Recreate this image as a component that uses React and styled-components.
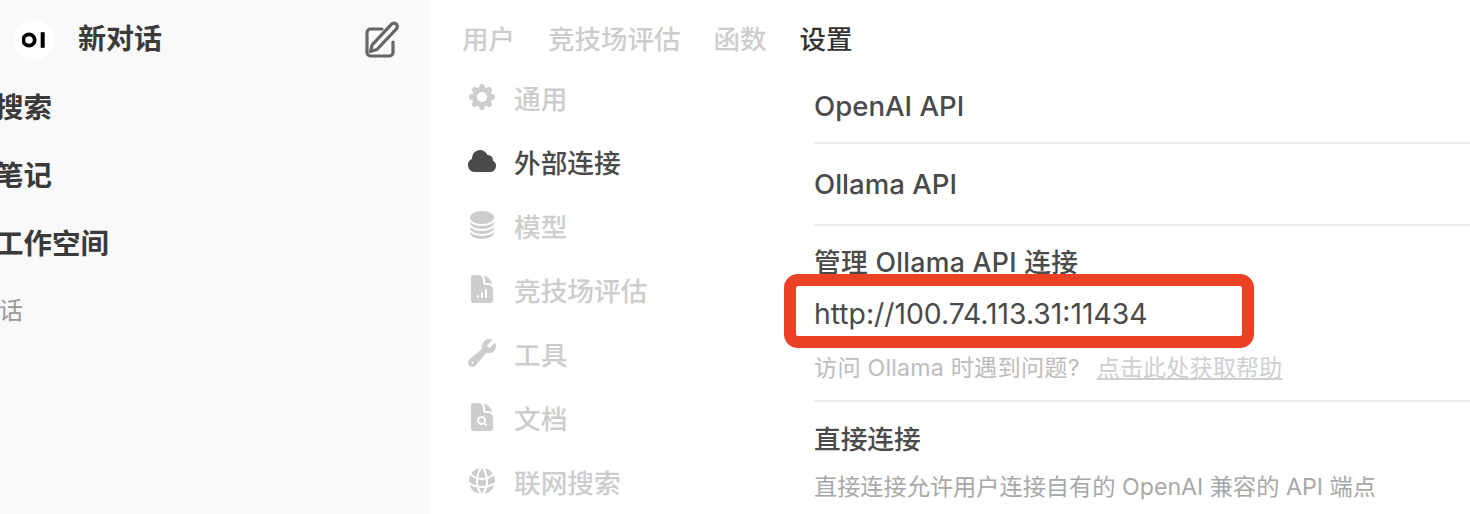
import styled, { createGlobalStyle } from "styled-components";
import {
  HiCog8Tooth,
  HiCloud,
  HiCircleStack,
  HiDocumentChartBar,
  HiWrench,
  HiDocumentMagnifyingGlass,
  HiGlobeAlt,
} from "react-icons/hi2";

const GlobalStyle = createGlobalStyle`
  html, body {
    margin: 0;
    height: 100%;
    overflow: hidden;
    background: #fff;
  }
  body {
    font-family: Inter, "Noto Sans CJK SC", sans-serif;
  }
`;

const Page = styled.div`
  display: flex;
  width: 1470px;
  height: 514px;
  overflow: hidden;
`;

const Sidebar = styled.aside`
  width: 430px;
  flex-shrink: 0;
  background: #f9f9f9;
  overflow: hidden;
`;

const SidebarHead = styled.div`
  display: flex;
  align-items: center;
  height: 40px;
  padding: 20px 28px 0 14px;
`;

const Logo = styled.div`
  width: 40px;
  height: 40px;
  border-radius: 50%;
  background: #fff;
  display: flex;
  align-items: center;
  justify-content: center;
`;

const NewChat = styled.div`
  margin: -2px 0 0 24px;
  font-size: 28px;
  font-weight: 600;
  line-height: 40px;
  color: #3a3a3a;
  flex: 1;
`;

const EditIcon = styled.svg`
  width: 42px;
  height: 42px;
  fill: none;
  stroke: #666;
  stroke-width: 3.2;
  stroke-linecap: round;
  stroke-linejoin: round;
`;

const SideNav = styled.nav`
  display: flex;
  flex-direction: column;
  margin: 28px 0 0 -5px;
`;

const SideLink = styled.div`
  height: 68px;
  line-height: 40px;
  font-size: 28.5px;
  font-weight: 600;
  color: #3a3a3a;
`;

const SideGroup = styled.div`
  font-size: 24px;
  line-height: 40px;
  color: #999;
  margin: -1px 0 0 4px;
`;

const Main = styled.main`
  flex: 1;
  min-width: 0;
  padding: 19px 0 0 32px;
`;

const Tabs = styled.div`
  display: flex;
  gap: 33px;
  height: 40px;
  align-items: center;
`;

const Tab = styled.div`
  font-size: 26.5px;
  font-weight: 500;
  line-height: 40px;
  color: ${(p) => (p.$active ? "#333" : "#cdcdcd")};
`;

const Columns = styled.div`
  display: flex;
  margin-top: 6px;
`;

const SettingsNav = styled.nav`
  width: 352px;
  flex-shrink: 0;
  display: flex;
  flex-direction: column;
`;

const NavItem = styled.div`
  display: flex;
  align-items: center;
  height: 64px;
  padding-left: 4px;
  gap: 16px;
  font-size: 26.7px;
  font-weight: 500;
  color: ${(p) => (p.$active ? "#4a4a4a" : "#cdcdcd")};

  svg {
    width: 32px;
    height: 32px;
    flex-shrink: 0;
  }
`;

const Content = styled.section`
  position: relative;
  flex: 1;
  min-width: 0;
`;

const ApiRow = styled.div`
  font-size: 27.6px;
  font-weight: 500;
  color: #4a4a4a;
  line-height: 40px;
  padding: ${(p) => p.$pad};
  border-bottom: 2px solid #ececec;
`;

const ManageBlock = styled.div`
  padding-top: 16px;
  border-bottom: 2px solid #ececec;
  height: 158px;
`;

const ManageTitle = styled.div`
  font-size: 26.7px;
  font-weight: 500;
  letter-spacing: 0.3px;
  line-height: 40px;
  color: #4a4a4a;
`;

const Url = styled.div`
  font-size: 28.3px;
  line-height: 40px;
  margin-top: 12px;
  color: #4a4a4a;
`;

const Hint = styled.div`
  font-size: 23.2px;
  letter-spacing: 0.2px;
  line-height: 40px;
  margin-top: 14px;
  color: #bcbcbc;
`;

const HelpLink = styled.span`
  margin-left: 17px;
  letter-spacing: 0;
  text-decoration: underline;
  color: #cfcfcf;
`;

const DirectTitle = styled.div`
  font-size: 26.7px;
  font-weight: 500;
  line-height: 40px;
  color: #4a4a4a;
  padding-top: 17px;
`;

const DirectDesc = styled.div`
  font-size: 23.2px;
  line-height: 40px;
  margin-top: 8px;
  color: #a8a8a8;
`;

/* red box someone drew over the screenshot */
const Annotation = styled.div`
  position: absolute;
  left: -30px;
  top: 209px;
  width: 470px;
  height: 74px;
  box-sizing: border-box;
  border: 12px solid #ec4125;
  border-radius: 14px;
`;

const navItems = [
  { icon: HiCog8Tooth, label: "通用" },
  { icon: HiCloud, label: "外部连接", active: true },
  { icon: HiCircleStack, label: "模型" },
  { icon: HiDocumentChartBar, label: "竞技场评估" },
  { icon: HiWrench, label: "工具" },
  { icon: HiDocumentMagnifyingGlass, label: "文档" },
  { icon: HiGlobeAlt, label: "联网搜索" },
];

const App = () => {
  return (
    <>
      <GlobalStyle />
      <Page>
        <Sidebar>
          <SidebarHead>
            <Logo>
              <svg width="24" height="16" viewBox="0 0 24 16" aria-label="OI">
                <circle cx="7" cy="8" r="5.7" fill="none" stroke="#000" strokeWidth="3.8" />
                <rect x="18.7" y="0.2" width="4" height="15.6" fill="#000" />
              </svg>
            </Logo>
            <NewChat>新对话</NewChat>
            <EditIcon viewBox="0 0 42 42">
              <path d="M22 10H10.5A3.5 3.5 0 0 0 7 13.5V33.5A3.5 3.5 0 0 0 10.5 37H29.5A3.5 3.5 0 0 0 33 33.5V23" />
              <path d="M10.5 32.5L12.2 25.9L31.6 5.2A3.3 3.3 0 0 1 36.4 9.8L17 30.5Z" />
            </EditIcon>
          </SidebarHead>
          <SideNav>
            <SideLink>搜索</SideLink>
            <SideLink>笔记</SideLink>
            <SideLink>工作空间</SideLink>
            <SideGroup>话</SideGroup>
          </SideNav>
        </Sidebar>
        <Main>
          <Tabs>
            <Tab>用户</Tab>
            <Tab>竞技场评估</Tab>
            <Tab>函数</Tab>
            <Tab $active>设置</Tab>
          </Tabs>
          <Columns>
            <SettingsNav>
              {navItems.map((item) => (
                <NavItem key={item.label} $active={item.active}>
                  <item.icon />
                  {item.label}
                </NavItem>
              ))}
            </SettingsNav>
            <Content>
              <ApiRow $pad="21px 0 16px">OpenAI API</ApiRow>
              <ApiRow $pad="20px 0 20px">Ollama API</ApiRow>
              <ManageBlock>
                <ManageTitle>管理 Ollama API 连接</ManageTitle>
                <Url>http://100.74.113.31:11434</Url>
                <Hint>
                  访问 Ollama 时遇到问题?
                  <HelpLink>点击此处获取帮助</HelpLink>
                </Hint>
              </ManageBlock>
              <DirectTitle>直接连接</DirectTitle>
              <DirectDesc>直接连接允许用户连接自有的 OpenAI 兼容的 API 端点</DirectDesc>
              <Annotation />
            </Content>
          </Columns>
        </Main>
      </Page>
    </>
  );
};

export default App;
